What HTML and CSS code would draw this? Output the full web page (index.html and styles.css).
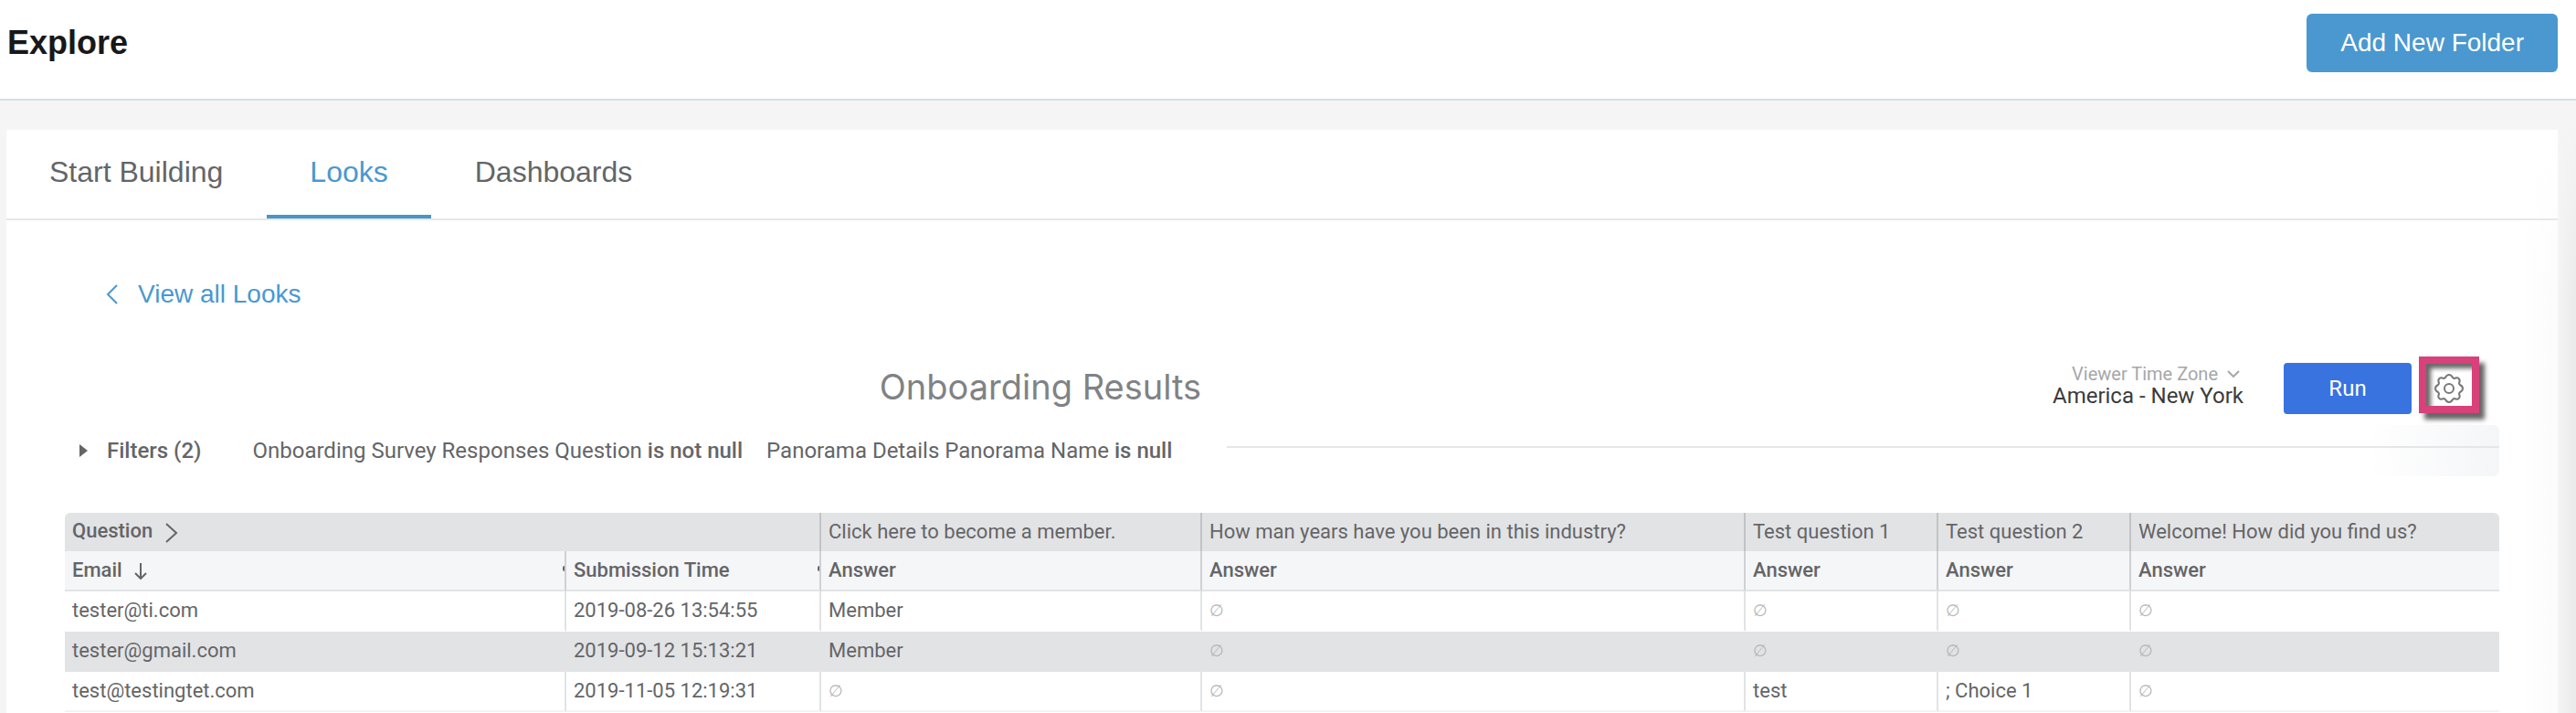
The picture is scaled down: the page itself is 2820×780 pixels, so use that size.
FILE: index.html
```html
<!DOCTYPE html>
<html lang="en">
<head>
    <meta charset="UTF-8">
    <meta name="viewport" content="width=device-width, initial-scale=1.0">
    <title>Explore</title>

    <link rel="stylesheet" href="styles.css">
</head>
<body>
    <header class="page-header">
        <h1>Explore</h1>
        <button class="add-button" type="button">Add New Folder</button>
    </header>

    <main>
        <div class="card">
            <nav class="tabs">
                <a href="#" class="tab">Start Building</a>
                <a href="#" class="tab active">Looks</a>
                <a href="#" class="tab">Dashboards</a>
            </nav>

            <a href="#" class="back-link">
                <svg width="14" height="22" viewBox="0 0 14 22" fill="none" stroke="currentColor" stroke-width="2"><path d="M12 1 2 11l10 10"/></svg>
                View all Looks
            </a>

            <section class="look">
                <div class="look-header">
                    <h2>Onboarding Results</h2>
                    <div class="timezone">
                        <button class="timezone-button" type="button">
                            Viewer Time Zone
                            <svg width="14" height="8" viewBox="0 0 14 8" fill="none" stroke="currentColor" stroke-width="2"><path d="M1 1l6 6 6-6"/></svg>
                        </button>
                        <span class="timezone-value">America - New York</span>
                    </div>
                    <button class="run-button" type="button">Run</button>
                    <button class="gear-button" type="button" aria-label="Settings">
                        <svg width="34" height="34" viewBox="-17 -17 34 34" fill="none" stroke="currentColor" stroke-width="2" stroke-linejoin="round">
                            <circle r="5"/>
                            <path d="M-4-12C-2-16 2-16 4-12Q5-11 6-11C10-13 13-10 11-6Q11-5 12-4C16-2 16 2 12 4Q11 5 11 6C13 10 10 13 6 11Q5 11 4 12C2 16-2 16-4 12Q-5 11-6 11C-10 13-13 10-11 6Q-11 5-12 4C-16 2-16-2-12-4Q-11-5-11-6C-13-10-10-13-6-11Q-5-11-4-12Z"/>
                        </svg>
                    </button>
                </div>

                <div class="filters">
                    <button class="filters-toggle" type="button">
                        <svg width="9" height="14" viewBox="0 0 9 14" fill="currentColor"><path d="M0 0l9 7-9 7z"/></svg>
                        Filters (2)
                    </button>
                    <span class="filter">Onboarding Survey Responses Question <b>is not null</b></span>
                    <span class="filter">Panorama Details Panorama Name <b>is null</b></span>
                    <div class="filters-line"></div>
                </div>

                <table>
                    <colgroup>
                        <col class="col-email">
                        <col class="col-time">
                        <col class="col-member">
                        <col class="col-years">
                        <col class="col-test">
                        <col class="col-test">
                        <col>
                    </colgroup>
                    <thead>
                        <tr class="pivots">
                            <th colspan="2" class="pivot-name">Question
                                <svg width="14" height="22" viewBox="0 0 14 22" fill="none" stroke="currentColor" stroke-width="2"><path d="M1 1l11 10L1 21"/></svg>
                            </th>
                            <th>Click here to become a member.</th>
                            <th>How man years have you been in this industry?</th>
                            <th>Test question 1</th>
                            <th>Test question 2</th>
                            <th>Welcome! How did you find us?</th>
                        </tr>
                        <tr class="fields">
                            <th class="has-menu">Email
                                <svg width="14" height="18" viewBox="0 0 14 18" fill="none" stroke="currentColor" stroke-width="2"><path d="M7 0v16M1 11l6 6 6-6"/></svg>
                            </th>
                            <th class="has-menu">Submission Time</th>
                            <th>Answer</th>
                            <th>Answer</th>
                            <th>Answer</th>
                            <th>Answer</th>
                            <th>Answer</th>
                        </tr>
                    </thead>
                    <tbody>
                        <tr>
                            <td>tester@ti.com</td>
                            <td>2019-08-26 13:54:55</td>
                            <td>Member</td>
                            <td class="null">∅</td>
                            <td class="null">∅</td>
                            <td class="null">∅</td>
                            <td class="null">∅</td>
                        </tr>
                        <tr>
                            <td>tester@gmail.com</td>
                            <td>2019-09-12 15:13:21</td>
                            <td>Member</td>
                            <td class="null">∅</td>
                            <td class="null">∅</td>
                            <td class="null">∅</td>
                            <td class="null">∅</td>
                        </tr>
                        <tr>
                            <td>test@testingtet.com</td>
                            <td>2019-11-05 12:19:31</td>
                            <td class="null">∅</td>
                            <td class="null">∅</td>
                            <td>test</td>
                            <td>; Choice 1</td>
                            <td class="null">∅</td>
                        </tr>
                    </tbody>
                </table>
            </section>
        </div>
    </main>
</body>
</html>
```
FILE: styles.css
```css
* {
    box-sizing: border-box;
}
body {
    margin: 0;
    min-height: 100vh;
    display: flex;
    flex-direction: column;
    background-color: #f5f5f5;
    font-family: "Liberation Sans", Arial, sans-serif;
    color: #646567;
}
button {
    border: none;
    background: none;
    padding: 0;
    font-family: inherit;
    color: inherit;
    cursor: pointer;
}
a {
    text-decoration: none;
}

/* Header */
.page-header {
    display: flex;
    align-items: flex-start;
    justify-content: space-between;
    height: 110px;
    padding: 15px 20px 0 8px;
    background-color: white;
    border-bottom: 2px solid #d0e0e6;
}
.page-header h1 {
    margin: 0;
    font-size: 36px;
    line-height: 64px;
    color: #17181a;
}
.add-button {
    height: 64px;
    padding: 0 37px;
    border-radius: 6px;
    background-color: #4a98cf;
    color: white;
    font-size: 28px;
}

/* soft shade along the right edge, fading in from the top */
main {
    flex: 1;
    display: flex;
    padding: 32px 20px 0 7px;
    background:
        linear-gradient(to bottom, #f5f5f5 20px, rgb(245 245 245 / 0%) 220px),
        linear-gradient(to left, #eaeaea, #f5f5f5 22px);
}
.card {
    flex: 1;
    min-width: 0;
    background:
        linear-gradient(to bottom, white 20px, rgb(255 255 255 / 0%) 200px),
        linear-gradient(to left, #fbfbfb, white 40px);
}

/* Tabs */
.tabs {
    display: flex;
    gap: 1px;
    border-bottom: 2px solid #e6e7e8;
}
.tab {
    padding: 0 47px;
    border-bottom: 4px solid transparent;
    line-height: 93px;
    font-size: 32px;
    color: #646567;
}
.tab.active {
    color: #4a98cf;
    border-bottom-color: #4a94c8;
}
.back-link {
    display: inline-flex;
    align-items: center;
    gap: 21px;
    margin: 62px 0 0 109px;
    font-size: 28px;
    line-height: 38px;
    color: #4a98cf;
}

/* Look */
.look {
    padding: 48px 64px 0;
    font-family: Roboto, sans-serif;
}
.look-header {
    display: flex;
    align-items: center;
}
.look-header h2 {
    flex: 1;
    margin: 0;
    padding: 4px 40px 0 0;
    text-align: center;
    font-family: Inter, sans-serif;
    font-size: 38px;
    font-weight: 400;
    line-height: 58px;
    color: #808285;
}
.timezone {
    display: flex;
    flex-direction: column;
    align-items: flex-end;
    margin-right: 44px;
}
.timezone-button {
    display: flex;
    align-items: center;
    gap: 10px;
    padding-right: 4px;
    font-size: 20px;
    line-height: 24px;
    color: #a5a7aa;
}
.timezone-value {
    font-size: 24px;
    line-height: 24px;
    color: #3a3b3d;
}
.run-button {
    width: 140px;
    height: 56px;
    margin-top: 8px;
    margin-right: 8px;
    border-radius: 4px;
    background-color: #3873e0;
    color: white;
    font-size: 24px;
}
.gear-button {
    display: flex;
    align-items: center;
    justify-content: center;
    width: 66px;
    height: 62px;
    margin-right: 22px;
    padding-top: 8px;
    border: 8px solid #d8417a;
    box-shadow: 6px 7px 5px #666, inset 5px 5px 5px #666;
    color: #77787a;
}
.gear-button svg {
    flex: none;
}

/* Filters */
.filters {
    display: flex;
    align-items: center;
    height: 56px;
    margin: 12px 0 40px;
    padding-left: 16px;
    border-radius: 6px;
    background: linear-gradient(to left, #f5f6f8, rgb(245 246 248 / 0%) 144px);
    font-size: 24px;
}
.filters-toggle {
    display: flex;
    align-items: center;
    gap: 21px;
    margin-right: 30px;
    font-size: 24px;
    font-weight: 500;
}
.filter {
    margin-left: 26px;
}
.filter b {
    font-weight: 500;
}
.filters-line {
    flex: 1;
    height: 2px;
    margin: 0 0 8px 60px;
    background-color: #e5e6e8;
}

/* Results table */
table {
    width: 100%;
    table-layout: fixed;
    border-collapse: separate;
    border-spacing: 0;
    border-radius: 6px 6px 0 0;
    overflow: hidden;
    font-size: 22px;
}
.col-email {
    width: 549px;
}
.col-time {
    width: 279px;
}
.col-member {
    width: 417px;
}
.col-years {
    width: 595px;
}
.col-test {
    width: 211px;
}
th,
td {
    padding: 0 8px;
    text-align: left;
    white-space: nowrap;
    border-right: 2px solid #e2e3e5;
}
th {
    height: 42px;
    padding-bottom: 2px;
    font-weight: 500;
    border-right-color: #d0d1d4;
}
th svg {
    margin-left: 8px;
    vertical-align: middle;
}
th:last-child,
td:last-child {
    border-right: none;
}
.pivots th {
    background-color: #e2e3e5;
    border-right-color: #c1c3c6;
    font-weight: 400;
}
.pivots .pivot-name {
    font-weight: 500;
}
.fields th {
    height: 44px;
    background-color: #f5f6f8;
    border-bottom: 2px solid #e2e3e5;
}
/* edge of the column menu peeking out */
.has-menu {
    position: relative;
}
.has-menu::after {
    content: "";
    position: absolute;
    top: 16px;
    right: 0;
    width: 2px;
    height: 6px;
    border-radius: 3px 0 0 3px;
    background-color: #646567;
}
td {
    height: 44px;
    line-height: 24px;
    border-bottom: 2px solid transparent;
}
tbody tr:nth-child(even) td {
    background-color: #e2e3e5;
}
tbody tr:last-child td {
    border-bottom-color: #f4f4f6;
}
.null {
    font-size: 18px;
    color: #b4b5b7;
}
```
